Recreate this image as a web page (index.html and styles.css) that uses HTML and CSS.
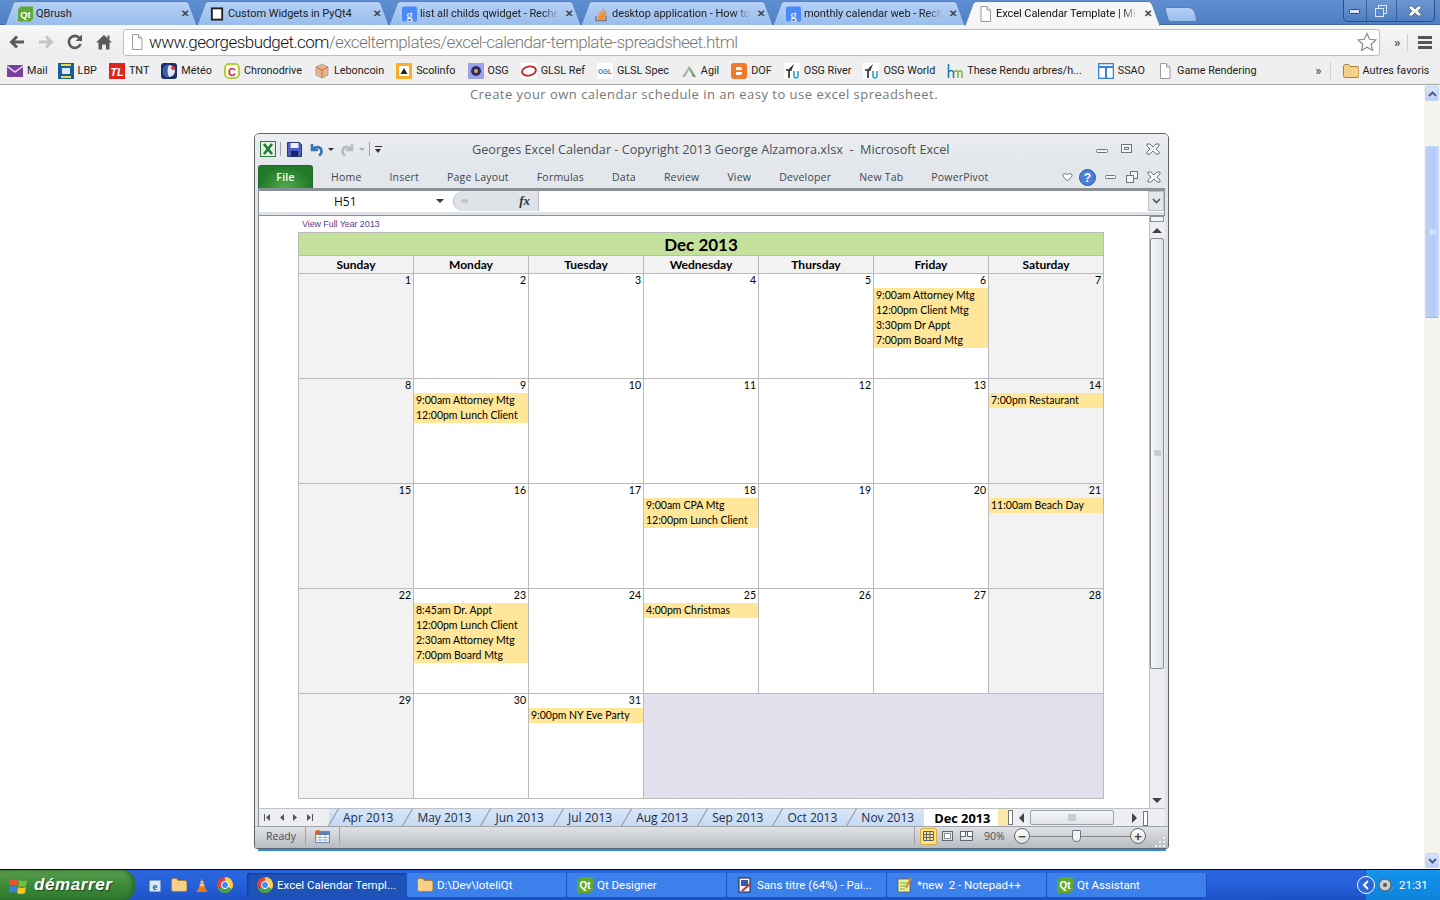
FILE: index.html
```html
<!DOCTYPE html>
<html lang="en">
<head>
  <meta charset="UTF-8">
  <title>Excel Calendar Template</title>
  <link rel="stylesheet" href="styles.css">
</head>
<body>
  <svg class="defs" width="0" height="0">
    <symbol id="doc" viewBox="0 0 14 16"><path d="M2.5 .5h6l3.500 3.500v11.500h-9.500z" fill="#fff" stroke="#9a9a9a"/><path d="M8.500 .5v3.500h3.500" fill="#e8e8e8" stroke="#9a9a9a"/></symbol>
    <symbol id="goog" viewBox="0 0 16 16"><rect width="16" height="16" rx="2" fill="#4a8af4"/><text x="8" y="13" font-size="14" font-family="Liberation Serif" fill="#fff" text-anchor="middle">g</text></symbol>
    <symbol id="qt" viewBox="0 0 16 16"><path d="M3 0h13v13l-3 3h-13v-13z" fill="#5fa831"/><text x="8" y="12" font-size="10" font-weight="700" font-family="Liberation Sans" fill="#fff" text-anchor="middle">Qt</text></symbol>
    <symbol id="tu" viewBox="0 0 16 16"><rect width="16" height="16" fill="#fff"/><path d="M5 6l5-5-2 5z" fill="#222"/><path d="M2 7h6M5 7v8" stroke="#222" stroke-width="1.600" fill="none"/><path d="M10 8v5q0 2 2 2t2-2v-5" stroke="#2aa0d8" stroke-width="1.600" fill="none"/></symbol>
    <symbol id="xbtn" viewBox="0 0 14 12"><path d="M1 1h3l3 3 3-3h3v2l-3 3 3 3v2h-3l-3-3-3 3h-3v-2l3-3-3-3z" fill="#f4f5f7" stroke="#6d7580"/></symbol>
    <symbol id="chrome" viewBox="0 0 16 16"><circle cx="8" cy="8" r="8" fill="#db4437"/><path d="M8 8l6.900 4a8 8 0 0 1-13.800 0z" fill="#3da34d"/><path d="M8 8l-6.900 4a8 8 0 0 1 6.900-12z" fill="#ffd04a" transform="rotate(120 8 8)"/><circle cx="8" cy="8" r="3.600" fill="#4a8af4" stroke="#fff"/></symbol>
    <symbol id="folder" viewBox="0 0 16 14"><path d="M.5 2.500q0-2 2-2h3l1.500 2h7q2 0 2 2v7q0 2-2 2h-11.500q-2 0-2-2z" fill="#f5d088" stroke="#a8823a"/></symbol>
  </svg>

  <!-- Browser tabs -->
  <div class="tabstrip">
    <div class="tab"><svg class="fav"><use href="#qt"/></svg><span class="tab-title">QBrush</span><span class="tab-x">✕</span></div>
    <div class="tab"><svg class="fav" viewBox="0 0 16 16"><rect x="2" y="2" width="11" height="12" fill="#fff" stroke="#222" stroke-width="2"/></svg><span class="tab-title">Custom Widgets in PyQt4</span><span class="tab-x">✕</span></div>
    <div class="tab"><svg class="fav"><use href="#goog"/></svg><span class="tab-title tab-fade">list all childs qwidget - Reche</span><span class="tab-x">✕</span></div>
    <div class="tab"><svg class="fav" viewBox="0 0 16 16"><path d="M2 10v5h11v-5" fill="none" stroke="#7d7d7d" stroke-width="1.500"/><path d="M4 12.500h7M4.300 10.300l7 .8M5 8l6.800 2M6.500 5.500l6 3.500M9 2.500l4.500 5.500" stroke="#f08a24" stroke-width="1.400"/></svg><span class="tab-title tab-fade">desktop application - How to</span><span class="tab-x">✕</span></div>
    <div class="tab"><svg class="fav"><use href="#goog"/></svg><span class="tab-title tab-fade">monthly calendar web - Rech</span><span class="tab-x">✕</span></div>
    <div class="tab tab-active"><svg class="fav"><use href="#doc"/></svg><span class="tab-title tab-fade">Excel Calendar Template | Mi</span><span class="tab-x">✕</span></div>
    <div class="tab-new"></div>
    <div class="win-btns">
      <span class="win-btn"><svg width="14" height="8" viewBox="0 0 14 8"><rect x="1.500" y="2.500" width="10" height="4" rx="1" fill="#dce8f8" stroke="#2c4a78"/></svg></span>
      <span class="win-btn"><svg width="14" height="14" viewBox="0 0 14 14"><rect x="4.500" y="1.500" width="8" height="8" fill="none" stroke="#dce8f8"/><rect x="1.500" y="4.500" width="8" height="8" fill="#5b87c5" stroke="#dce8f8"/></svg></span>
      <span class="win-btn win-close"><svg width="14" height="12"><use href="#xbtn"/></svg></span>
    </div>
  </div>

  <!-- Address bar -->
  <div class="toolbar">
    <svg class="nav" viewBox="0 0 18 18"><path d="M16 9h-11M9 3.500l-5.500 5.500 5.500 5.500" fill="none" stroke="#5a5a5a" stroke-width="3"/></svg>
    <svg class="nav" viewBox="0 0 18 18"><path d="M2 9h11M9 3.500l5.500 5.500-5.500 5.500" fill="none" stroke="#c4c4c4" stroke-width="3"/></svg>
    <svg class="nav" viewBox="0 0 18 18"><path d="M14.500 11a6 6 0 1 1-1-6" fill="none" stroke="#5a5a5a" stroke-width="2.600"/><path d="M16 1.500v6.500h-6.500z" fill="#5a5a5a"/></svg>
    <svg class="nav" viewBox="0 0 18 18"><path d="M9 2l8 7.500h-2.500v7h-3.500v-5h-4v5h-3.500v-7h-2.500z" fill="#5a5a5a"/><rect x="12.500" y="2.500" width="2" height="4" fill="#5a5a5a"/></svg>
    <div class="urlbox">
      <svg class="url-doc"><use href="#doc"/></svg>
      <span class="url-text">www.georgesbudget.com<span class="url-path">/exceltemplates/excel-calendar-template-spreadsheet.html</span></span>
      <svg class="star" viewBox="0 0 20 20"><path d="M10 1.500l2.600 5.800 6.300.7-4.700 4.200 1.300 6.200-5.500-3.200-5.500 3.200 1.300-6.200-4.700-4.200 6.300-.7z" fill="#fff" stroke="#8a8a8a" stroke-width="1.200"/></svg>
    </div>
    <span class="more">»</span>
    <span class="tool-sep"></span>
    <span class="menu"><i></i><i></i><i></i></span>
  </div>

  <!-- Bookmarks -->
  <div class="bookmarks">
    <span class="bm bm-first"><svg class="bm-ic" viewBox="0 0 16 16"><rect y="2" width="16" height="12" fill="#7b3f9e"/><path d="M0 3l8 6 8-6" fill="none" stroke="#e4d6ee" stroke-width="1.400"/></svg>Mail</span>
    <span class="bm"><svg class="bm-ic" viewBox="0 0 16 16"><rect width="16" height="16" fill="#14609e"/><rect x="3" y="1" width="10" height="2" fill="#e8d84a"/><rect x="3" y="13" width="10" height="2" fill="#e8d84a"/><rect x="4" y="5" width="8" height="6" fill="#dfe8f2"/></svg>LBP</span>
    <span class="bm"><svg class="bm-ic" viewBox="0 0 16 16"><rect width="16" height="16" fill="#e0241c"/><text x="8" y="13" font-size="11" font-weight="700" font-style="italic" font-family="Liberation Sans" fill="#fff" text-anchor="middle">TL</text></svg>TNT</span>
    <span class="bm"><svg class="bm-ic" viewBox="0 0 16 16"><rect width="16" height="16" rx="3" fill="#1c2f6e"/><circle cx="8" cy="8" r="6" fill="#dfe6f5"/><path d="M8 2a6 6 0 0 0 0 12q-3-6 0-12z" fill="#3f5aa8"/><circle cx="12" cy="5" r="2" fill="#e0342c"/></svg>Météo</span>
    <span class="bm"><svg class="bm-ic" viewBox="0 0 16 16"><rect x="1" y="1" width="14" height="14" rx="4" fill="#fff" stroke="#b8cc3a" stroke-width="2"/><text x="8" y="12.500" font-size="11" font-weight="700" font-family="Liberation Sans" fill="#d0281e" text-anchor="middle">C</text></svg>Chronodrive</span>
    <span class="bm"><svg class="bm-ic" viewBox="0 0 16 16"><path d="M8 1l6 3v8l-6 3-6-3v-8z" fill="#e8b48e" stroke="#a8a8a8"/><path d="M2 4l6 3 6-3M8 7v8" fill="none" stroke="#d86a2a"/></svg>Leboncoin</span>
    <span class="bm"><svg class="bm-ic" viewBox="0 0 16 16"><rect width="16" height="16" fill="#f8ae26"/><rect x="3" y="3" width="10" height="10" fill="#fff"/><path d="M8 5l3.500 6h-7z" fill="#222"/></svg>Scolinfo</span>
    <span class="bm"><svg class="bm-ic" viewBox="0 0 16 16"><rect width="16" height="16" fill="#9da2ea"/><circle cx="8" cy="8" r="5" fill="#2c2c6c"/><circle cx="8" cy="8" r="2" fill="#e0b040"/></svg>OSG</span>
    <span class="bm"><svg class="bm-ic" viewBox="0 0 16 16"><rect width="16" height="16" fill="#fff"/><ellipse cx="8" cy="8" rx="7" ry="4.500" fill="none" stroke="#c0282c" stroke-width="1.800" transform="rotate(-12 8 8)"/></svg>GLSL Ref</span>
    <span class="bm"><svg class="bm-ic" viewBox="0 0 16 16"><rect width="16" height="16" fill="#fff"/><text x="8" y="11" font-size="6.500" font-weight="700" font-family="Liberation Sans" fill="#4a7a9a" text-anchor="middle">OGL</text></svg>GLSL Spec</span>
    <span class="bm"><svg class="bm-ic" viewBox="0 0 16 16"><path d="M1 14l7-11 7 11h-3l-4-7-4 7z" fill="#a8b8a8"/><path d="M8 3l7 11h-3z" fill="#6c9c6c"/></svg>Agil</span>
    <span class="bm"><svg class="bm-ic" viewBox="0 0 16 16"><rect width="16" height="16" rx="3" fill="#f2782a"/><path d="M5 4h4q2 0 2 3h-6zM5 9h6v1q0 2-2 2h-4z" fill="#fff"/></svg>DOF</span>
    <span class="bm"><svg class="bm-ic"><use href="#tu"/></svg>OSG River</span>
    <span class="bm"><svg class="bm-ic"><use href="#tu"/></svg>OSG World</span>
    <span class="bm bm-long"><svg class="bm-ic" viewBox="0 0 16 16"><path d="M1.500 1v14" stroke="#1a7a9a" stroke-width="1.500"/><path d="M1.500 9q3-3 5 0v6" fill="none" stroke="#1a7a9a" stroke-width="1.500"/><path d="M7 9q2.500-2.500 4 0v6M11 9q3-2.500 4 0v6" fill="none" stroke="#7ab04a" stroke-width="1.500"/></svg>These Rendu arbres/h...</span>
    <span class="bm"><svg class="bm-ic" viewBox="0 0 16 16"><rect x=".5" y=".5" width="15" height="15" fill="#fff" stroke="#3a80e0" stroke-width="1.600"/><path d="M0 4h16M8 4v12" stroke="#3a80e0" stroke-width="2"/></svg>SSAO</span>
    <span class="bm bm-wide"><svg class="bm-ic"><use href="#doc"/></svg>Game Rendering</span>
    <span class="more">»</span>
    <span class="tool-sep"></span>
    <span class="bm bm-last"><svg class="bm-ic"><use href="#folder"/></svg>Autres favoris</span>
  </div>

  <div class="page">
    <div class="page-main">
      <p class="lead">Create your own calendar schedule in an easy to use excel spreadsheet.</p>

      <!-- Excel window -->
      <div class="xl">
        <div class="xl-title">
          <svg class="xl-logo" viewBox="0 0 16 16"><rect x=".5" y=".5" width="15" height="15" fill="#e4f0dc" stroke="#2c7a3c"/><path d="M4 3l8 10M12 3l-8 10" stroke="#1f7a34" stroke-width="2.600"/></svg>
          <span class="qa-sep"></span>
          <svg class="qa" viewBox="0 0 15 15"><path d="M.5 .5h12l2 2v12h-14z" fill="#4a5fc0" stroke="#2a3478"/><rect x="3.500" y="1" width="8" height="5" fill="#eef0fa"/><rect x="4" y="9" width="7" height="5" fill="#1c2468"/></svg>
          <svg class="qa qa-undo" viewBox="0 0 15 15"><path d="M3 2v6h6M3.500 7.500c3-4 9-3 9 2q0 2.500-2.500 4" fill="none" stroke="#3a72b8" stroke-width="2.600"/></svg>
          <span class="qa-arrow"></span>
          <svg class="qa qa-redo" viewBox="0 0 15 15"><path d="M12 2v6h-6M11.500 7.500c-3-4-9-3-9 2q0 2.500 2.500 4" fill="none" stroke="#b8bdc2" stroke-width="2.600"/></svg>
          <span class="qa-arrow qa-arrow-off"></span>
          <span class="qa-sep"></span>
          <span class="qa-custom"></span>
          <span class="xl-name">Georges Excel Calendar - Copyright 2013 George Alzamora.xlsx&nbsp; -&nbsp; Microsoft Excel</span>
          <span class="xl-ctl">
            <svg width="12" height="12" viewBox="0 0 12 12"><rect x=".5" y="6.500" width="11" height="3" rx="1" fill="#f4f5f7" stroke="#6d7580"/></svg>
            <svg width="12" height="12" viewBox="0 0 12 12"><rect x=".5" y="1.500" width="10" height="8" fill="#f4f5f7" stroke="#6d7580"/><rect x="3.500" y="4.500" width="4" height="2" fill="none" stroke="#6d7580"/></svg>
            <svg width="14" height="12"><use href="#xbtn"/></svg>
          </span>
        </div>

        <div class="ribbon">
          <span class="rb-file">File</span>
          <span>Home</span><span>Insert</span><span>Page Layout</span><span>Formulas</span><span>Data</span><span>Review</span><span>View</span><span>Developer</span><span>New Tab</span><span>PowerPivot</span>
          <span class="rb-ctl">
            <svg class="rb-heart" width="11" height="9" viewBox="0 0 11 9"><path d="M1 2.500q0-2 2-2 1.500 0 2.500 1.500 1-1.500 2.500-1.500 2 0 2 2 0 1-4.500 5.500-4.500-4.500-4.500-5.500z" fill="#fff" stroke="#6d7580"/></svg>
            <svg width="17" height="17" viewBox="0 0 17 17"><circle cx="8.500" cy="8.500" r="8" fill="#4a80d8" stroke="#2c5caa"/><text x="8.500" y="13" font-size="12" font-weight="700" font-family="Liberation Sans" fill="#fff" text-anchor="middle">?</text></svg>
            <svg width="12" height="12" viewBox="0 0 12 12"><rect x=".5" y="4.500" width="10" height="3" rx="1" fill="#f4f5f7" stroke="#6d7580"/></svg>
            <svg width="12" height="12" viewBox="0 0 12 12"><rect x="4.500" y=".5" width="7" height="7" fill="#f4f5f7" stroke="#6d7580"/><rect x=".5" y="4.500" width="7" height="7" fill="#f4f5f7" stroke="#6d7580"/></svg>
            <svg width="14" height="12"><use href="#xbtn"/></svg>
          </span>
        </div>

        <div class="fbar">
          <div class="namebox"><span>H51</span><i class="fb-arrow"></i></div>
          <div class="fx-btn"><span class="fx-dot"></span><span class="fx">fx</span></div>
          <div class="f-input"></div>
          <div class="f-more"><svg width="9" height="6" viewBox="0 0 9 6"><path d="M1 1l3.500 3.500 3.500-3.500" fill="none" stroke="#555" stroke-width="1.600"/></svg></div>
        </div>

        <div class="xl-body">
          <div class="sheet">
            <div class="year-link">View Full Year 2013</div>
            <div class="cal">
              <div class="cal-title">Dec 2013</div>
              <div class="dow">Sunday</div><div class="dow">Monday</div><div class="dow">Tuesday</div><div class="dow">Wednesday</div><div class="dow">Thursday</div><div class="dow">Friday</div><div class="dow">Saturday</div>

              <div class="day we"><b>1</b></div>
              <div class="day"><b>2</b></div>
              <div class="day"><b>3</b></div>
              <div class="day"><b>4</b></div>
              <div class="day"><b>5</b></div>
              <div class="day"><b>6</b><p>9:00am Attorney Mtg</p><p>12:00pm Client Mtg</p><p>3:30pm Dr Appt</p><p>7:00pm Board Mtg</p></div>
              <div class="day we"><b>7</b></div>

              <div class="day we"><b>8</b></div>
              <div class="day"><b>9</b><p>9:00am Attorney Mtg</p><p>12:00pm Lunch Client</p></div>
              <div class="day"><b>10</b></div>
              <div class="day"><b>11</b></div>
              <div class="day"><b>12</b></div>
              <div class="day"><b>13</b></div>
              <div class="day we"><b>14</b><p>7:00pm Restaurant</p></div>

              <div class="day we"><b>15</b></div>
              <div class="day"><b>16</b></div>
              <div class="day"><b>17</b></div>
              <div class="day"><b>18</b><p>9:00am CPA Mtg</p><p>12:00pm Lunch Client</p></div>
              <div class="day"><b>19</b></div>
              <div class="day"><b>20</b></div>
              <div class="day we"><b>21</b><p>11:00am Beach Day</p></div>

              <div class="day we"><b>22</b></div>
              <div class="day"><b>23</b><p>8:45am Dr. Appt</p><p>12:00pm Lunch Client</p><p>2:30am Attorney Mtg</p><p>7:00pm Board Mtg</p></div>
              <div class="day"><b>24</b></div>
              <div class="day"><b>25</b><p>4:00pm Christmas</p></div>
              <div class="day"><b>26</b></div>
              <div class="day"><b>27</b></div>
              <div class="day we"><b>28</b></div>

              <div class="day we"><b>29</b></div>
              <div class="day"><b>30</b></div>
              <div class="day"><b>31</b><p>9:00pm NY Eve Party</p></div>
              <div class="day-blank"></div>
            </div>
          </div>
          <div class="vscroll">
            <div class="vs-split"></div>
            <div class="vs-btn"><i class="up"></i></div>
            <div class="vs-thumb"><svg width="7" height="7" viewBox="0 0 7 7"><path d="M0 1h7M0 3h7M0 5h7" stroke="#a4adb8"/></svg></div>
            <div class="vs-track"></div>
            <div class="vs-btn"><i class="down"></i></div>
          </div>
        </div>

        <div class="sheet-tabs">
          <div class="st-nav">
            <svg width="9" height="9" viewBox="0 0 9 9"><path d="M1.500 1v7" stroke="#555"/><path d="M7 1v7l-4-3.500z" fill="#555"/></svg>
            <svg width="9" height="9" viewBox="0 0 9 9"><path d="M7 1v7l-4-3.500z" fill="#555"/></svg>
            <svg width="9" height="9" viewBox="0 0 9 9"><path d="M2 1v7l4-3.500z" fill="#555"/></svg>
            <svg width="9" height="9" viewBox="0 0 9 9"><path d="M7.500 1v7" stroke="#555"/><path d="M2 1v7l4-3.500z" fill="#555"/></svg>
          </div>
          <div class="st-tabs">
            <span class="st">Apr 2013</span><span class="st">May 2013</span><span class="st">Jun 2013</span><span class="st">Jul 2013</span><span class="st">Aug 2013</span><span class="st">Sep 2013</span><span class="st">Oct 2013</span><span class="st">Nov 2013</span><span class="st st-active">Dec 2013</span>
          </div>
          <div class="hs-split"></div>
          <div class="hscroll">
            <i class="hs-left"></i>
            <div class="hs-thumb"><svg width="8" height="7" viewBox="0 0 8 7"><path d="M1 0v7M3 0v7M5 0v7M7 0v7" stroke="#a4adb8"/></svg></div>
            <i class="hs-right"></i>
            <div class="hs-split"></div>
          </div>
        </div>

        <div class="status">
          <span class="st-ready">Ready</span>
          <span class="st-macro"><svg width="15" height="13" viewBox="0 0 15 13"><rect x=".5" y="1.500" width="14" height="11" fill="#fff" stroke="#6a88b0"/><rect x="1" y="2" width="13" height="3" fill="#4f80c0"/><path d="M1 7.500h13M1 10h13M5 5v7M10 5v7" stroke="#9ab4d4"/><circle cx="3" cy="2.500" r="2.500" fill="#e0582c"/></svg></span>
          <span class="views">
            <span class="view view-on"><svg width="11" height="10" viewBox="0 0 11 10"><path d="M.5 .5h10v9h-10zM.5 3.500h10M.5 6.500h10M3.500 .5v9M7 .5v9" fill="none" stroke="#5c6570"/></svg></span>
            <span class="view"><svg width="11" height="10" viewBox="0 0 11 10"><rect x=".5" y=".5" width="10" height="9" fill="#e4e6e8" stroke="#5c6570"/><rect x="2.500" y="2.500" width="6" height="5" fill="#fff" stroke="#8a929c"/></svg></span>
            <span class="view"><svg width="13" height="10" viewBox="0 0 13 10"><path d="M.5 .5h12v9h-12z" fill="#e4e6e8" stroke="#5c6570"/><path d="M.5 .5h5v5h-5zM7.500 .5h5v5h-5z" fill="#fff" stroke="#5c6570"/></svg></span>
          </span>
          <span class="zoom-pct">90%</span>
          <span class="zoom">
            <span class="zoom-btn">−</span>
            <span class="zoom-track"><i></i></span>
            <span class="zoom-btn">+</span>
          </span>
          <svg class="grip" width="11" height="11" viewBox="0 0 11 11"><path d="M9 1h2v2h-2zM5 5h2v2h-2zM9 5h2v2h-2zM1 9h2v2h-2zM5 9h2v2h-2zM9 9h2v2h-2z" fill="#f2f3f5"/></svg>
        </div>
      </div>
      <div class="xl-shadow"></div>
    </div>

    <div class="pscroll">
      <div class="ps-btn"><svg width="9" height="6" viewBox="0 0 9 6"><path d="M1 5l3.500-3.500 3.500 3.500" fill="none" stroke="#4d6185" stroke-width="2"/></svg></div>
      <div class="ps-thumb"><svg width="7" height="7" viewBox="0 0 7 7"><path d="M0 1h7M0 3h7M0 5h7" stroke="#e8effc"/></svg></div>
      <div class="ps-track"></div>
      <div class="ps-btn"><svg width="9" height="6" viewBox="0 0 9 6"><path d="M1 1l3.500 3.500 3.500-3.500" fill="none" stroke="#4d6185" stroke-width="2"/></svg></div>
    </div>
  </div>

  <!-- Windows taskbar -->
  <div class="taskbar">
    <div class="start">
      <svg width="19" height="19" viewBox="0 0 19 19"><path d="M1 4q4-2 8 0l-1 6q-4-2-8 0z" fill="#e8552c"/><path d="M10 4q4 2 8 0l-1 6q-4 2-8 0z" fill="#7ab83c"/><path d="M0 11q4-2 8 0l-1 6q-4-2-8 0z" fill="#3a80e0"/><path d="M9 11q4 2 8 0l-1 6q-4 2-8 0z" fill="#f4c62c"/></svg>
      <span>démarrer</span>
    </div>
    <div class="quick">
      <svg class="tb-ic" viewBox="0 0 16 16"><rect x="1" y="3" width="12" height="12" fill="#d8e8f8" stroke="#2a5ca8"/><text x="7" y="13" font-size="11" font-weight="700" font-family="Liberation Serif" fill="#2a5ca8" text-anchor="middle">e</text></svg>
      <svg class="tb-ic"><use href="#folder"/></svg>
      <svg class="tb-ic" viewBox="0 0 16 16"><path d="M8 1l3 10h-6z" fill="#f08a1c"/><path d="M6.500 5h3M5.500 8h5" stroke="#fff"/><path d="M2.500 15l2-4h7l2 4z" fill="#e87a14"/></svg>
      <svg class="tb-ic"><use href="#chrome"/></svg>
    </div>
    <div class="task task-on"><svg class="tb-ic"><use href="#chrome"/></svg>Excel Calendar Templ...</div>
    <div class="task"><svg class="tb-ic"><use href="#folder"/></svg>D:\Dev\loteliQt</div>
    <div class="task"><svg class="tb-ic"><use href="#qt"/></svg>Qt Designer</div>
    <div class="task"><svg class="tb-ic" viewBox="0 0 16 16"><rect x="2" y="1" width="11" height="14" fill="#f4f6fa" stroke="#223"/><rect x="4" y="3" width="7" height="6" fill="#3a5ca8"/><path d="M5 14l8-7" stroke="#c83030" stroke-width="2"/></svg>Sans titre (64%) - Pai...</div>
    <div class="task"><svg class="tb-ic" viewBox="0 0 16 16"><rect x="1" y="2" width="12" height="13" fill="#f0f2a0" stroke="#666"/><path d="M3 6h8M3 9h8M3 12h5" stroke="#6ab02c"/><path d="M9 11l5-10" stroke="#e08820" stroke-width="2"/></svg>*new  2 - Notepad++</div>
    <div class="task"><svg class="tb-ic"><use href="#qt"/></svg>Qt Assistant</div>
    <div class="tray">
      <span class="tray-arrow"><svg width="8" height="10" viewBox="0 0 8 10"><path d="M6 1l-4 4 4 4" fill="none" stroke="#fff" stroke-width="2"/></svg></span>
      <svg class="tb-ic" viewBox="0 0 16 16"><circle cx="7" cy="8" r="6" fill="#c8ccd0" stroke="#555"/><circle cx="7" cy="8" r="2" fill="#555"/><path d="M12 14q3-1 3-4" stroke="#6a88d0" fill="none"/></svg>
      <span class="clock">21:31</span>
    </div>
  </div>
</body>
</html>
```

FILE: styles.css
```css
* { box-sizing: border-box; margin: 0; padding: 0; }
html, body { height: 100%; overflow: hidden; }
body {
  width: 1440px; height: 900px;
  display: flex; flex-direction: column;
  font-family: "Roboto", "Liberation Sans", sans-serif;
  background: #fff; color: #1a1a1a;
}
.defs { position: absolute; }
svg { display: block; flex: none; }

/* Browser tabs */
.tabstrip {
  height: 25px; padding: 1px 5px 0;
  display: flex; align-items: stretch;
  background: linear-gradient(#5f8fd2, #4f80c6);
  border-bottom: 1px solid #41699f;
}
.tab {
  position: relative; z-index: 0;
  width: 192px; height: 25px; padding: 0 6px 0 13px;
  display: flex; align-items: center;
  font-size: 11px; letter-spacing: -.05px; color: #222;
}
.tab::before, .tab::after {
  content: ""; position: absolute; z-index: -1; top: 0; bottom: 1px; width: 55%;
  background: linear-gradient(#b4d0f5, #99bdee);
  border-top: 1px solid #5a7eb0;
}
.tab::before { left: 4px; border-left: 1px solid #5a7eb0; transform: skewX(-20deg); border-radius: 3px 0 0 0; }
.tab::after { right: 4px; border-right: 1px solid #5a7eb0; transform: skewX(20deg); border-radius: 0 3px 0 0; }
.tab-active { width: 195px; z-index: 1; color: #111; }
.tab-active::before, .tab-active::after { background: #f6f6f6; bottom: 0; }
.fav { width: 15px; height: 16px; margin-right: 3px; }
.tab-title { flex: 1; white-space: nowrap; overflow: hidden; }
.tab-fade { -webkit-mask-image: linear-gradient(to right, #000 88%, transparent); }
.tab-x { flex: none; width: 10px; margin-left: 6px; font-size: 10px; font-weight: 700; color: #444; }
.tab-new {
  width: 30px; height: 15px; margin: 6px 0 0 6px;
  background: linear-gradient(#b4d0f5, #99bdee);
  border: 1px solid #5a7eb0; border-radius: 3px 6px 3px 3px;
  transform: skewX(15deg);
}
.win-btns {
  margin: -1px 0 0 auto; width: 92px; height: 22px;
  display: flex;
  border: 1px solid #2f507f; border-top: none; border-radius: 0 0 5px 5px;
  background: linear-gradient(#6c97d3, #4f7fc2);
}
.win-btn { flex: 1; display: flex; align-items: center; justify-content: center; border-left: 1px solid #3a5f92; }
.win-btn:first-child { flex: .75; border-left: none; }
.win-close { flex: 1.300; }

/* Address bar */
.toolbar {
  height: 33px; padding: 3px 8px 2px 8px;
  display: flex; align-items: center;
  background: linear-gradient(#f6f6f6, #ececec);
}
.nav { width: 18px; height: 18px; margin-right: 11px; }
.nav:nth-child(4) { margin-right: 10px; }
.urlbox {
  width: 1257px; height: 27px; padding: 0 2px 0 6px;
  display: flex; align-items: center;
  background: #fff; border: 1px solid #bdbdbd; border-radius: 3px;
}
.url-doc { width: 14px; height: 16px; margin-right: 5px; }
.url-text { flex: 1; font-size: 17px; font-weight: 300; color: #111; letter-spacing: -.54px; white-space: nowrap; }
.url-path { color: #777; }
.star { width: 20px; height: 20px; }
.more { font-size: 13px; font-weight: 700; color: #555; }
.toolbar .more { margin-left: 14px; }
.tool-sep { width: 1px; height: 17px; margin: 0 6px; background: #cfcfcf; }
.menu { display: flex; flex-direction: column; gap: 2px; margin-left: 4px; }
.menu i { display: block; width: 14px; height: 3px; background: #555; }

/* Bookmarks */
.bookmarks {
  height: 27px; padding: 0 8px 1px 7px;
  display: flex; align-items: center;
  background: #efefef;
  border-bottom: 1px solid #a6a6a6;
  font-size: 10.800px; color: #222;
}
.bm { display: flex; align-items: center; white-space: nowrap; margin-right: 12px; }
.bm-first { margin-right: 10px; }
.bm-long { margin-right: 16px; }
.bm-ic { width: 16px; height: 16px; margin-right: 4px; }
.bm-wide { margin-right: 59px; }
.bookmarks .more { font-size: 12px; margin-right: 6px; }
.bookmarks .tool-sep { margin: 0 12px 0 2px; }
.bm-last { margin-right: 0; }

/* Page */
.page { height: 784px; display: flex; }
.page-main { width: 1424px; }
.lead {
  height: 48px; padding: 0 16px 0 0;
  text-align: center;
  font-family: "Open Sans", sans-serif; font-size: 13px; letter-spacing: .48px; color: #777;
}
.pscroll { width: 16px; display: flex; flex-direction: column; background: #f5f4ef; padding: 1px; }
.ps-btn {
  height: 15px; display: flex; align-items: center; justify-content: center;
  background: linear-gradient(#dbe6fb, #bcd0f7); border: 1px solid #c2d3f5; border-radius: 2px;
}
.ps-thumb {
  height: 172px; margin-top: 45px;
  display: flex; align-items: center; justify-content: center;
  background: linear-gradient(to right, #bdd0f8, #b4caf6 70%, #c8d8f9);
  border: 1px solid #c6d6f8; border-bottom-color: #9db5e8; border-radius: 2px;
}
.ps-track { flex: 1; }

/* Excel window */
.xl {
  margin-left: 254px; width: 915px; height: 716px;
  display: flex; flex-direction: column;
  padding: 0 3px;
  background: #dfe3e8;
  border: 1px solid #5d6570; border-radius: 5px 5px 3px 3px;
  font-family: "Open Sans", sans-serif;
  overflow: hidden;
}
.xl-shadow { margin-left: 258px; width: 908px; height: 2px; background: #2f8ae0; }
.xl-title {
  height: 30px; flex: none; padding-left: 5px;
  display: flex; align-items: center;
  background: linear-gradient(#eceef1, #e3e6ea);
  margin: 0 -3px;
}
.xl-logo { width: 16px; height: 16px; }
.qa-sep { width: 1px; height: 14px; margin: 0 6px 0 4px; background: #9aa0a8; }
.qa { width: 15px; height: 15px; }
.qa-undo { margin-left: 7px; }
.qa-redo { margin-left: 6px; }
.qa-arrow { width: 0; height: 0; margin: 0 0 0 4px; border: 3px solid transparent; border-top: 3px solid #333; border-bottom: none; }
.qa-arrow-off { border-top-color: #a8adb3; }
.qa-custom { width: 7px; height: 6px; border-top: 1px solid #333; position: relative; margin-left: -1px; }
.qa-custom::after { content: ""; position: absolute; left: 0; top: 2px; border: 3.500px solid transparent; border-top: 4px solid #333; border-bottom: none; }
.xl-name { flex: 1; padding-left: 90px; font-size: 12.700px; color: #4a5058; white-space: nowrap; }
.xl-ctl { display: flex; align-items: center; gap: 13px; margin-right: 8px; }
.ribbon {
  height: 24px; flex: none;
  display: flex; align-items: center; gap: 28px;
  background: #e3e6ea; margin: 0 -3px; padding: 2px 0 0 3px;
  font-size: 10.500px; letter-spacing: .2px; color: #3e4650; white-space: nowrap;
}
.rb-file {
  flex: none; width: 55px; height: 23px; margin-right: -10px; align-self: flex-end;
  display: flex; align-items: center; justify-content: center;
  color: #fff; font-weight: 600;
  background: radial-gradient(ellipse at 50% 110%, #56b04c, #207a2a 70%);
  border: 1px solid #1d6a28; border-bottom: none; border-radius: 3px 3px 0 0;
}
.rb-ctl { display: flex; align-items: center; gap: 9px; margin-left: auto; margin-right: 7px; }
.rb-heart { margin-right: -3px; }

/* Formula bar */
.fbar {
  height: 28px; flex: none;
  display: flex; align-items: flex-start;
  background: #fff;
  border: 1px solid #8b9096; border-top-width: 3px;
  box-shadow: inset 0 -3px 0 #dfe3e8;
}
.namebox {
  width: 191px; height: 20px; padding: 0 6px 0 75px;
  display: flex; align-items: center; justify-content: space-between;
  font-size: 12px; color: #111;
}
.fb-arrow { border: 4px solid transparent; border-top: 4px solid #333; border-bottom: none; }
.fx-btn {
  width: 86px; height: 20px; margin-left: 3px;
  display: flex; align-items: center; justify-content: space-between;
  padding: 0 8px 0 7px;
  background: #dfe2e7; border: 1px solid #b8bcc2; border-width: 0 1px 0 1px; border-radius: 10px 0 0 10px;
}
.fx-dot { width: 7px; height: 4px; background: #c4c8ce; border-radius: 2px; }
.fx { font-family: "Liberation Serif", serif; font-style: italic; font-weight: 700; font-size: 13px; color: #333; }
.f-input { flex: 1; height: 20px; }
.f-more {
  width: 16px; height: 20px;
  display: flex; align-items: center; justify-content: center;
  background: #e4e6e9; border: 1px solid #bcc0c5;
}

/* Sheet */
.xl-body { height: 592px; flex: none; display: flex; background: #fff; border-left: 1px solid #8b9096; }
.sheet { flex: 1; padding-left: 39px; }
.year-link { height: 16px; padding: 3px 0 0 4px; font-family: "Liberation Sans", sans-serif; font-size: 9px; color: #5b4290; letter-spacing: -.1px; }
.cal {
  width: 806px;
  display: grid; grid-template-columns: repeat(7, 115px); grid-template-rows: 23px 18px repeat(5, 105px);
  border-top: 1px solid #bbb; border-left: 1px solid #bbb;
  font-family: "Lato", sans-serif; color: #000;
}
.cal-title {
  grid-column: 1 / -1;
  display: flex; align-items: center; justify-content: center;
  font-size: 17px; font-weight: 700;
  background: #c4e29b; border-right: 1px solid #bbb; border-bottom: 1px solid #bbb;
}
.dow {
  display: flex; align-items: center; justify-content: center;
  font-size: 12px; font-weight: 700;
  background: #f2f2f2; border-right: 1px solid #bbb; border-bottom: 1px solid #bbb;
}
.day { border-right: 1px solid #bbb; border-bottom: 1px solid #bbb; }
.day.we { background: #f2f2f2; }
.day b {
  display: block; height: 14px; padding-right: 2px;
  text-align: right; font-weight: 400; font-size: 10.500px; line-height: 13px;
}
.day p { height: 15px; padding-left: 2px; background: #ffe699; font-size: 10.500px; line-height: 15px; white-space: nowrap; }
.day-blank { grid-column: 4 / -1; background: #e4dfec; border-right: 1px solid #bbb; border-bottom: 1px solid #bbb; }

.vscroll { width: 16px; display: flex; flex-direction: column; padding-right: 1px; background: #eceef1; border-left: 1px solid #bcc0c5; }
.vs-split { height: 6px; background: #f4f5f7; border: 1px solid #8b9096; }
.vs-btn { height: 16px; display: flex; align-items: center; justify-content: center; }
.up { border: 5px solid transparent; border-bottom: 5px solid #444; border-top: none; }
.down { border: 5px solid transparent; border-top: 5px solid #444; border-bottom: none; }
.vs-thumb {
  height: 431px;
  display: flex; align-items: center; justify-content: center;
  background: linear-gradient(to right, #f6f7f9, #dfe2e8);
  border: 1px solid #878d95; border-radius: 2px;
}
.vs-track { flex: 1; }

/* Sheet tabs */
.sheet-tabs { height: 18px; flex: none; display: flex; background: #eceef1; border-top: 1px solid #bcc0c5; border-left: 1px solid #8b9096; }
.st-nav { width: 70px; flex: none; display: flex; align-items: center; gap: 5px; padding-left: 4px; }
.st-tabs { display: flex; height: 17px; }
.st {
  position: relative; height: 17px; padding: 0 10px 0 14px;
  display: flex; align-items: center;
  background: linear-gradient(#d8e6f7, #c6daf3);
  font-size: 12px; color: #222b44; white-space: nowrap;
}
.st::before {
  content: ""; position: absolute; left: -1px; bottom: 0; width: 1px; height: 20px;
  background: #8a96a8; transform: rotate(30deg); transform-origin: bottom;
}
.st-active {
  padding: 0 18px 0 10px;
  background: linear-gradient(to right, #fff 88%, #fbe7a6 88%);
  font-size: 12.800px; font-weight: 700; color: #000;
}
.st-active::before { display: none; }
.hs-split { flex: none; width: 5px; height: 15px; margin-top: 1px; background: #fff; border: 1px solid #777; }
.hscroll { flex: 1; display: flex; align-items: center; }
.hs-left { margin-left: 6px; border: 5px solid transparent; border-right: 5px solid #444; border-left: none; }
.hs-right { margin-left: 18px; margin-right: 6px; border: 5px solid transparent; border-left: 5px solid #444; border-right: none; }
.hs-thumb {
  width: 84px; height: 15px; margin-left: 6px;
  display: flex; align-items: center; justify-content: center;
  background: linear-gradient(#f6f7f9, #dfe2e8); border: 1px solid #9aa0a8; border-radius: 2px;
}

/* Status bar */
.status {
  height: 22px; flex: none;
  display: flex; align-items: center;
  margin: 0 -3px; padding: 0 3px 3px 8px;
  background: linear-gradient(#e0e2e5, #b8bbc0);
  border-top: 1px solid #9ea3a9;
  font-size: 10.500px; color: #4a5058;
}
.st-ready { width: 42px; padding-left: 3px; }
.st-macro {
  width: 35px; height: 100%;
  display: flex; align-items: center; justify-content: center;
  border-left: 1px solid #a0a4aa; border-right: 1px solid #a0a4aa;
}
.views { margin-left: 574px; display: flex; align-items: center; gap: 2px; padding-left: 5px; height: 100%; border-left: 1px solid #a0a4aa; }
.view { width: 17px; height: 17px; display: flex; align-items: center; justify-content: center; }
.view-on { background: #fde38a; border: 1px solid #e0ac3c; border-radius: 2px; }
.zoom-pct { margin-left: 9px; width: 26px; }
.zoom { margin-left: 4px; display: flex; align-items: center; }
.zoom-btn {
  width: 16px; height: 16px;
  display: flex; align-items: center; justify-content: center;
  background: linear-gradient(#fff, #dcdee2); border: 1px solid #666; border-radius: 50%;
  font: 700 13px/1 "Liberation Sans", sans-serif; color: #444;
}
.zoom-track { position: relative; width: 100px; height: 1px; background: #80858c; }
.zoom-track i {
  position: absolute; left: 42px; top: -6px; width: 9px; height: 12px;
  background: #f2f3f5; border: 1px solid #6d7580; border-radius: 1px 1px 4px 4px;
}
.grip { margin-left: auto; align-self: flex-end; margin-bottom: -2px; }

/* Windows taskbar */
.taskbar {
  height: 31px; flex: none;
  display: flex; align-items: center;
  background: linear-gradient(#2a66dc 0%, #2660dc 50%, #1d50c4 100%);
  border-top: 1px solid #000;
  font-family: "Roboto", sans-serif; font-size: 11.500px; color: #fff;
}
.start {
  width: 135px; height: 100%; padding-left: 9px; gap: 6px;
  display: flex; align-items: center;
  background: linear-gradient(#5a9e4c, #3d8a3a 50%, #2f7a2e);
  border-radius: 0 12px 12px 0;
  box-shadow: inset -3px 0 4px #2a6a2c;
}
.start span {
  font-family: "Liberation Sans", sans-serif; font-style: italic; font-weight: 700; font-size: 17px;
  text-shadow: 1px 1px 1px #1d4a1d; letter-spacing: .6px;
}
.tb-ic { width: 16px; height: 16px; }
.quick { width: 112px; padding-left: 13px; display: flex; gap: 7px; }
.task {
  width: 160px; height: 24px; padding-left: 10px; gap: 4px;
  display: flex; align-items: center; white-space: pre;
  background: #3c80ec; border-right: 1px solid #1d50c4;
  border-radius: 2px;
}
.task-on { background: #1e52b7; box-shadow: inset 1px 1px 2px #143a8c; }
.tray {
  margin-left: auto; width: 75px; height: 100%;
  display: flex; align-items: center; gap: 3px;
  background: linear-gradient(#1494ea, #0e82dc);
  border-left: 1px solid #0b5fb8;
}
.tray-arrow {
  width: 18px; height: 18px; margin-left: -9px;
  display: flex; align-items: center; justify-content: center;
  background: #2a66dc; border: 1px solid #fff; border-radius: 50%;
}
.clock { margin-left: 2px; }
```
